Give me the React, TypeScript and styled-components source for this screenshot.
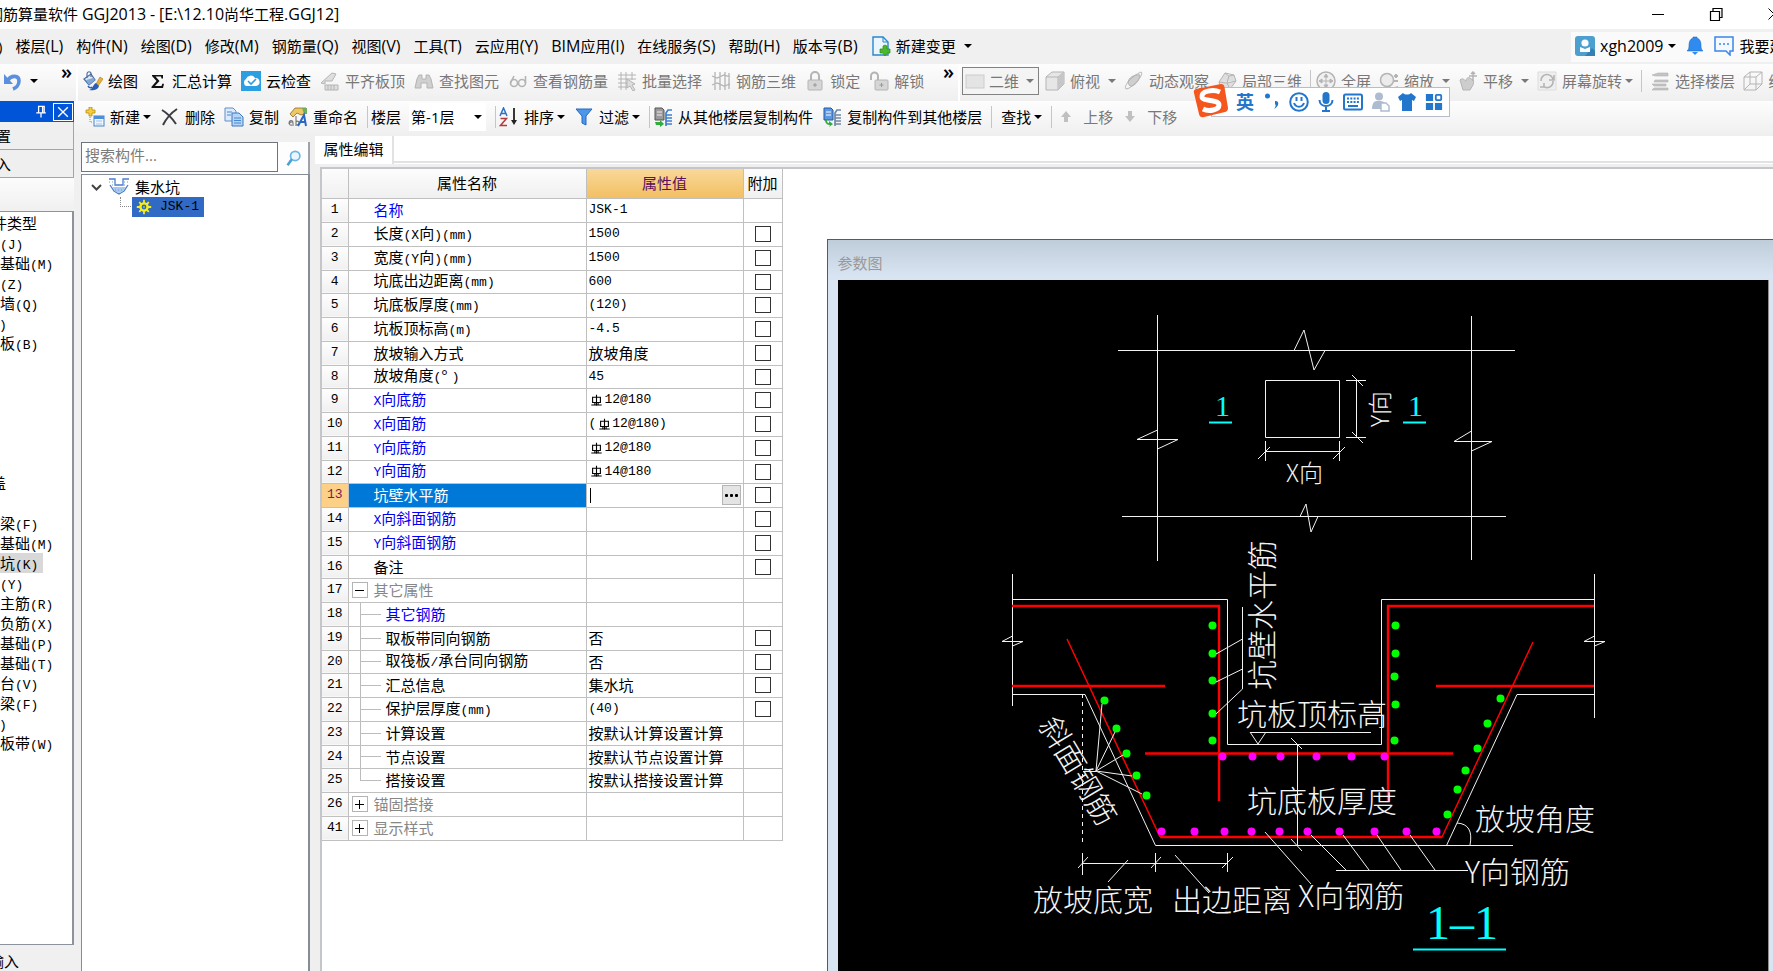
import React from "react";
import styled, { createGlobalStyle, css } from "styled-components";

const SANS = '"Open Sans", "Noto Sans CJK SC", sans-serif';
const MONO = '"Liberation Mono", "Noto Sans CJK SC", monospace';

const GlobalStyle = createGlobalStyle`
  *, *::before, *::after { box-sizing: border-box; }
  body { margin: 0; background: #fff; color: #000; font: 15px/20px ${SANS}; overflow: hidden; }
  button, input, select { font: inherit; color: inherit; margin: 0; padding: 0; border: 0; background: none; border-radius: 0; }
`;

/* ---------- icons ---------- */

const G = "#b4b4b4";
const L = "#dedede";

const glyphs: Record<string, React.ReactNode> = {
  undo: (
    <>
      <path d="M6 9c3-5 11-5 11 1 0 4-3 7-6 8" fill="none" stroke="#5b8fe0" strokeWidth="3.600" />
      <path d="M2 3v10h9z" fill="#5b8fe0" />
    </>
  ),
  paint: (
    <>
      <path d="M1 8l7-5 4 6-6 5z" fill="#dfe9f5" stroke="#4d6f9b" strokeWidth="1.200" />
      <path d="M3 9l7-2 2 2-6 5z" fill="#7fa7d8" />
      <path d="M4 7V3c0-3 4-3 4 0v3" fill="none" stroke="#4d6f9b" strokeWidth="1.200" />
      <path d="M17 6l3 2-5 7-2-2z" fill="#e9b23c" stroke="#a67617" strokeWidth=".6" />
      <path d="M13 12l3 3c-1 4-6 5-10 4 4-1 4-6 7-7z" fill="#2a5fb8" />
      <path d="M5 15c1 2 3 2 4 1" fill="none" stroke="#2a5fb8" strokeWidth="1.500" />
    </>
  ),
  sigma: <path d="M5 4h11v3.500h-1.500L14 5.600H8.500l4 4.400-4.600 5H14.500l.8-2.200H17L16 17H4.500v-1.200L9.500 10 5 5z" fill="#111" />,
  cloud: (
    <>
      <rect width="20" height="20" fill="#2b9fe2" />
      <path d="M5 15a4 4 0 0 1 0-7 5 5 0 0 1 9-1 4 4 0 0 1 1 8z" fill="#fff" />
      <path d="M7 10l3 3 5-5" fill="none" stroke="#2b9fe2" strokeWidth="1.600" />
    </>
  ),
  align: (
    <>
      <path d="M1 12L12 2l4 1-4 7H5v3z" fill={L} stroke={G} />
      <path d="M5 14h13v5H5zM8 14v5M11 14v5M14 14v5" fill={L} stroke={G} />
    </>
  ),
  find: (
    <path d="M3 8l2-4h3v4h4V4h3l2 4 2 9h-6v-5H7v5H1z" fill="#d0d0d0" stroke={G} />
  ),
  glasses: (
    <g fill="none" stroke={G} strokeWidth="1.600">
      <circle cx="6" cy="12" r="3.500" />
      <circle cx="14" cy="12" r="3.500" />
      <path d="M2.500 12L6 5M17.500 12V5" />
    </g>
  ),
  batch: (
    <>
      <path d="M1 4h18M1 8h18M1 12h10M1 16h10M4 1v18M9 1v18M15 1v8" stroke={G} fill="none" />
      <path d="M10 8l8 5-3 1 3 5-2 1-3-5-3 2z" fill={L} stroke={G} />
    </>
  ),
  rebar3d: (
    <path d="M1 5l5 2 7-3 6 2M1 14l5-2 7 3 6-2M4 1v18M9 1v18M14 1v18M18 2v16" stroke={G} fill="none" strokeWidth="1.300" />
  ),
  lock: (
    <>
      <path d="M6 9V5a4 4 0 0 1 8 0v4" fill="none" stroke={G} strokeWidth="2" />
      <rect x="3" y="9" width="14" height="10" rx="1" fill="#d6d6d6" stroke={G} />
      <path d="M10 12v4M8 14h4" stroke="#999" />
    </>
  ),
  unlock: (
    <>
      <path d="M2 9V5a3.500 3.500 0 0 1 7 0v4" fill="none" stroke={G} strokeWidth="2" />
      <rect x="6" y="9" width="13" height="10" rx="1" fill="#d6d6d6" stroke={G} />
      <path d="M12.500 12v4M10.500 14h4" stroke="#999" />
    </>
  ),
  slab: <rect x="1" y="4" width="18" height="13" fill="#e4e4e4" stroke="#ccc" />,
  cube: (
    <>
      <path d="M1 6l6-5h12v12l-6 6H1z" fill="#e6e6e6" stroke={G} />
      <path d="M1 6h12v13M13 6l6-5" fill="none" stroke={G} />
      <path d="M13 6l6-5v12l-6 6z" fill="#c6c6c6" />
    </>
  ),
  wire: <path d="M1 6l6-5h12v12l-6 6H1zM1 6h12v13M13 6l6-5M7 1v12h12M7 13l-6 6" fill="none" stroke={G} />,
  orbit: (
    <>
      <path d="M4 12c0-5 6-9 12-8-1 6-5 11-10 11z" fill="#cfcfcf" stroke={G} />
      <path d="M2 18C-1 15 8 5 17 1c4 2-9 17-15 17z" fill="none" stroke={G} />
    </>
  ),
  part3d: (
    <path d="M2 11l6-9 9 2 2 6-6 8-9-1zM2 11l8 1 9-2M10 12l3 6M8 2l4 3 5-1M12 5l-2 7" fill={L} stroke={G} />
  ),
  full: (
    <>
      <circle cx="10" cy="10" r="9" fill="#f0f0f0" stroke={G} strokeWidth="1.500" />
      <path d="M10 3l2 3H8zM10 17l2-3H8zM3 10l3-2v4zM17 10l-3-2v4zM5 10h10M10 5v10" fill={G} stroke={G} />
    </>
  ),
  zoom: (
    <>
      <circle cx="8" cy="9" r="6.500" fill="#ececec" stroke={G} strokeWidth="1.500" />
      <path d="M10 15l3 4M17 3v4M15 5h4M15 10h4M16 17l3-1" stroke={G} strokeWidth="2" fill="none" />
    </>
  ),
  pan: (
    <>
      <path d="M2 9c3-3 5 1 6 1 0-4 4-4 5-2 3 0 3 4 2 6l-3 5H5z" fill="#cdcdcd" stroke={G} />
      <path d="M15 1v9M11 5h8M13 3l2-2 2 2" stroke={G} fill="none" strokeWidth="1.500" />
    </>
  ),
  rotate: (
    <>
      <path d="M1 1h18v18H1z" fill="#efefef" stroke="#ddd" />
      <path d="M4 10a6 6 0 0 1 12-1M16 10a6 6 0 0 1-10 5M17 4v5h-5M3 16h4v-4" fill="none" stroke={G} strokeWidth="1.600" />
    </>
  ),
  floors: <path d="M2 4l6-2h10v3H5zM5 9h13v2H4zM2 13h14v2H4zM4 17h14v2H2z" fill="#c4c4c4" stroke={G} strokeWidth=".6" />,
  newItem: (
    <>
      <path d="M4 0h3v3h3v3H7v3H4V6H1V3h3z" fill="#f4cf3a" stroke="#b98c12" strokeWidth=".8" />
      <rect x="9" y="9" width="10" height="10" fill="#eef5fd" stroke="#4b83c6" />
      <path d="M9 9h10v3H9z" fill="#4b8fd9" />
      <path d="M11 14h6M11 17h6" stroke="#9fc1e6" />
      <path d="M5 10v5h3" fill="none" stroke="#888" strokeDasharray="1 1" />
    </>
  ),
  remove: <path d="M2 3c5 3 10 8 14 14M17 2C11 6 6 12 3 18" stroke="#3c3c44" strokeWidth="2" fill="none" />,
  copy: (
    <>
      <path d="M1 1h8l3 3v10H1z" fill="#dcebfb" stroke="#5f8fcb" />
      <path d="M8 6h7l4 4v9H8z" fill="#b5d5f7" stroke="#3f77bd" />
      <path d="M10 11h7M10 13.500h7M10 16h7M3 5h5M3 8h4" stroke="#4b87cf" />
    </>
  ),
  rename: (
    <>
      <path d="M2 7l5-6h11v5l-5 2-4-2-4 4z" fill="#efc765" stroke="#8c6a25" strokeWidth=".8" />
      <path d="M14 1h5v6h-3z" fill="#6fae5a" />
      <path d="M1 17c0-5 4-4 4-1v3M5 15c-4-1-5 4-1 3M8 9v10M8 15c3-3 5 3 0 3" fill="none" stroke="#777" strokeWidth="1.100" />
      <path d="M10 19l6-11 2 11M12 15h6" fill="none" stroke="#2a66c4" strokeWidth="2" />
    </>
  ),
  sort: (
    <>
      <path d="M1 9l3.500-8L8 9M2.200 6.500h4.600" fill="none" stroke="#2f6fc4" strokeWidth="1.500" />
      <path d="M1.500 11.500h6l-6 7h6.500" fill="none" stroke="#b33b3b" strokeWidth="1.500" />
      <path d="M15 1v14" stroke="#222" strokeWidth="1.800" />
      <path d="M12 13h6l-3 5z" fill="#222" />
    </>
  ),
  filter: <path d="M2 2h16l-6 7v9l-4-2V9z" fill="#4c97ec" stroke="#2468bd" />,
  copyFrom: (
    <>
      <path d="M2 1h7l2 2v10H2z" fill="#9a9a9a" stroke="#555" />
      <path d="M4 5h5M4 8h5" stroke="#eee" />
      <path d="M19 3h-4l-2 3v13M13 8h6M13 11h6M13 14h6M13 17h6" fill="none" stroke="#3f7fd0" strokeWidth="1.700" />
      <path d="M2 15h5v-2l4 4-4 3v-2H3z" fill="#2fae3e" />
    </>
  ),
  copyTo: (
    <>
      <path d="M2 1h7l2 2v10H2z" fill="#5c97e4" stroke="#25589f" />
      <path d="M4 5h5M4 8h5" stroke="#fff" />
      <path d="M19 3h-4l-2 3v13M13 8h6M13 11h6M13 14h6M13 17h6" fill="none" stroke="#6e88a8" strokeWidth="1.700" />
      <path d="M3 13c0 4 3 5 5 5l-1 2 4-3-4-3v2c-2 0-2-2-2-3z" fill="#2fae3e" />
    </>
  ),
  up: <path d="M8 4l5 6h-3v5H6v-5H3z" fill="#c0c0c0" />,
  down: <path d="M8 15l5-6h-3V4H6v5H3z" fill="#c0c0c0" />,
  change: (
    <>
      <path d="M2 1h10l5 5v13H2z" fill="#eaf5fd" stroke="#2a86cc" strokeWidth="1.400" />
      <path d="M12 1v5h5" fill="none" stroke="#2a86cc" />
      <path d="M12 10l2-1 2 1v3h3v4h-3l-2 3-2-3H9v-4h3z" fill="#4bb928" stroke="#2f8a15" strokeWidth=".7" />
    </>
  ),
  user: (
    <>
      <rect width="20" height="20" rx="3" fill="#4d9fd0" />
      <path d="M10 20l7-8 3 3v5z" fill="#3580b0" />
      <circle cx="10" cy="7" r="3.600" fill="#fff" />
      <path d="M5 11l5 2 5-2v5H5z" fill="#fff" />
    </>
  ),
  bell: (
    <>
      <path d="M8 1h4v1c3 1 4 4 4 7 0 4 1 5 2 6H2c1-1 2-2 2-6 0-3 1-6 4-7z" fill="#2f8bf0" stroke="#1f5fae" strokeWidth=".5" />
      <path d="M7 16h6l-3 3z" fill="#2f8bf0" />
    </>
  ),
  chat: (
    <>
      <path d="M1 1h18v14h-3v4l-4-4H1z" fill="#f5f9ff" stroke="#3b86e8" strokeWidth="1.500" />
      <path d="M5 8h2M9 8h2M13 8h2" stroke="#3b86e8" strokeWidth="1.500" />
    </>
  ),
  search: (
    <>
      <circle cx="12" cy="7" r="5.500" fill="#eaf5fd" stroke="#6cb6e4" strokeWidth="2" />
      <path d="M8 11l-5 7" stroke="#4a9fd6" strokeWidth="3" />
    </>
  ),
  pit: (
    <>
      <path d="M0 2h6v6h8V2h6M1 8l4 6 5 3 5-3 4-6" fill="none" stroke="#4a7ecb" strokeWidth="1.300" />
      <path d="M3 10h14l-4 5-3 1-3-1z" fill="#a9c8ef" />
      <path d="M0 5h5M15 5h5M3 8h14M6 13h8" stroke="#6d9bdc" strokeDasharray="1 2" />
    </>
  ),
  gear: (
    <>
      <circle cx="10" cy="10" r="4.500" fill="none" stroke="#f5ee18" strokeWidth="3" />
      <path d="M10 1v4M10 15v4M1 10h4M15 10h4M4 4l2.500 2.500M13.500 13.500L16 16M4 16l2.500-2.500M13.500 6.500L16 4" stroke="#f5ee18" strokeWidth="2.200" />
      <circle cx="10" cy="10" r="1" fill="#f5ee18" />
    </>
  ),
  pin: <path d="M7 3h7v8H7zM4 11h12M10 11v6M12 3v8" fill="none" stroke="#fff" strokeWidth="1.600" />,
  cross: <path d="M4 4l12 12M16 4L4 16" fill="none" stroke="#fff" strokeWidth="1.700" />,
  min: <path d="M4 10.500h12" stroke="#000" />,
  restore: <path d="M4.500 7.500h9v9h-9zM7 7.500v-3h9v9h-2.500" fill="none" stroke="#000" strokeWidth="1.200" />,
  close: <path d="M4.500 4.500l11 11M15.500 4.500l-11 11" stroke="#000" />,
  rebar: (
    <path d="M4 5h12v8H4zM10 1v17M2 17h16M7.500 13v4M12.500 13v4" fill="none" stroke="#000" strokeWidth="1.700" />
  ),
  punct: <path d="M3 4a2.500 2.500 0 1 1 5 0 2.500 2.500 0 1 1-5 0M13 9c4-1 5 5-1 8 2-3 2-4 1-5z" fill="#2277cc" />,
  smile: (
    <g fill="none" stroke="#2277cc" strokeWidth="2">
      <circle cx="10" cy="10" r="8.800" />
      <path d="M7.500 5v4M12.500 5v4M5 11c2 5 8 5 10 0" />
    </g>
  ),
  mic: (
    <>
      <rect x="6.500" y="0" width="7" height="12" rx="3.500" fill="#2277cc" />
      <path d="M3.500 8c0 8 13 8 13 0M10 14v4M6 19h8" fill="none" stroke="#2277cc" strokeWidth="2" />
    </>
  ),
  keyboard: (
    <>
      <rect x="1" y="2.500" width="18" height="15" rx="1.500" fill="none" stroke="#2277cc" strokeWidth="2" />
      <path d="M4 6.500h12M4 10h12" stroke="#2277cc" strokeWidth="2" strokeDasharray="2 1.300" />
      <path d="M5 14h10" stroke="#2277cc" strokeWidth="2" />
    </>
  ),
  person: (
    <>
      <circle cx="9" cy="4.500" r="4" fill="#aebcd2" />
      <path d="M2 17c0-9 5-8 7-8s6 0 7 4v4z" fill="#aebcd2" />
      <path d="M11 11h5l3 3v5h-8z" fill="#fff" stroke="#aebcd2" strokeWidth="1.500" />
    </>
  ),
  shirt: <path d="M6 1c2 2 6 2 8 0l5 4-2 4-2-1v11H5V8L3 9 1 5z" fill="#2277cc" />,
  apps: (
    <>
      <path d="M1 1h8v8H1zM1 11h8v8H1zM11 11h8v8h-8z" fill="#2277cc" />
      <rect x="12" y="2" width="6" height="6" rx="1" fill="none" stroke="#2277cc" strokeWidth="2" />
    </>
  ),
};

const IconSvg = styled.svg<{ $size: number }>`
  flex: none;
  display: block;
  width: ${(p) => p.$size}px;
  height: ${(p) => p.$size}px;
`;

const Icon = ({ name, size = 20 }: { name: string; size?: number }) => (
  <IconSvg $size={size} viewBox="0 0 20 20" aria-hidden="true">
    {glyphs[name]}
  </IconSvg>
);

const Arrow = styled.span`
  flex: none;
  border: 4px solid transparent;
  border-top-color: currentColor;
  border-bottom-width: 0;
`;

/* Half-width characters have a face of their own next to the full-width ones. */
const Half = styled.span<{ $ui?: boolean }>`
  font-family: ${(p) => (p.$ui ? SANS : MONO)};
  font-size: ${(p) => (p.$ui ? 16 : 13)}px;
`;

const Mixed = ({ text, ui }: { text: string; ui?: boolean }) => (
  <>
    {text.split(/([\x21-\x7e]+)/).map((part, i) => (i % 2 ? <Half key={i} $ui={ui}>{part}</Half> : part))}
  </>
);

/* ---------- frame ---------- */

const Page = styled.div`
  position: relative;
  display: flex;
  flex-direction: column;
  height: 100vh;
  overflow: hidden;
  white-space: nowrap;
`;

const TitleBar = styled.header`
  display: flex;
  align-items: center;
  height: 29px;
  padding-bottom: 2px;
`;

const Title = styled.h1`
  flex: 1;
  margin: 0;
  font-size: 15px;
  font-weight: 400;
  text-indent: -12px;
`;

const WindowButtons = styled.div`
  display: flex;
  flex: none;
  margin-right: -30px;
`;

const WindowButton = styled.button`
  display: flex;
  justify-content: center;
  align-items: center;
  width: 58px;
  height: 26px;
`;

const MenuBar = styled.nav`
  display: flex;
  align-items: center;
  height: 35px;
  background: #f0f0f0;
`;

const Menus = styled.div`
  display: flex;
  flex: 1;
  align-items: center;
  gap: 13px;
  min-width: 0;
  padding-bottom: 2px;
  overflow: hidden;
`;

const MenuButton = styled.button<{ $cut?: boolean }>`
  display: flex;
  flex: none;
  align-items: center;
  gap: 8px;
  margin-left: ${(p) => (p.$cut ? -2 : 0)}px;
`;

const UserArea = styled.div`
  display: flex;
  flex: none;
  align-items: center;
  gap: 9px;
  width: 202px;
  height: 30px;
  padding: 0 0 2px 4px;
  background: #fafafa;
  overflow: hidden;
`;

const UserButton = styled.button`
  display: flex;
  flex: none;
  align-items: center;
  gap: 5px;
`;

/* ---------- toolbars ---------- */

const ToolRow = styled.div<{ $height: number }>`
  display: flex;
  height: ${(p) => p.$height}px;
  gap: 2px;
`;

const ToolGroup = styled.div<{ $width?: number; $start: number; $gap?: number }>`
  display: flex;
  flex: ${(p) => (p.$width ? "none" : "1")};
  width: ${(p) => (p.$width ? p.$width + "px" : "auto")};
  min-width: 0;
  align-items: center;
  gap: ${(p) => p.$gap ?? 9}px;
  padding: 0 0 3px ${(p) => p.$start}px;
  background: linear-gradient(#fdfdfd, #efefef);
  overflow: hidden;
`;

const ToolButton = styled.button<{ $tight?: boolean }>`
  display: flex;
  flex: none;
  align-items: center;
  gap: ${(p) => (p.$tight ? 3 : 8)}px;
  &:disabled { color: #787878; }
`;

const ToolFace = styled.span`
  display: flex;
  align-items: center;
  gap: 5px;
`;

const Divider = styled.span<{ $pull?: number }>`
  flex: none;
  width: 1px;
  height: 22px;
  margin-right: ${(p) => -(p.$pull ?? 6)}px;
  background: #c6c6c6;
`;

const Overflow = styled.button`
  flex: none;
  align-self: flex-start;
  margin-left: auto;
  margin-right: 4px;
  font-size: 20px;
  font-weight: 600;
  line-height: 16px;
`;

const Picker = styled.div<{ $framed?: boolean }>`
  display: flex;
  flex: none;
  align-items: center;
  width: 77px;
  height: 28px;
  margin-right: ${(p) => (p.$framed ? -2 : 0)}px;
  padding: 0 4px 0 2px;
  gap: 4px;
  background: ${(p) => (p.$framed ? "#f4f4f4" : "#fff")};
  border: ${(p) => (p.$framed ? "1px solid #828282" : "0")};
  color: ${(p) => (p.$framed ? "#787878" : "#000")};
  select { flex: 1; min-width: 0; appearance: none; opacity: 1; }
`;

const PickerLabel = styled.label`
  display: flex;
  flex: none;
  align-items: center;
  gap: 8px;
`;

type ToolProps = { icon?: string; label: string; menu?: boolean; tight?: boolean; off?: boolean };

const Tool = ({ icon, label, menu, tight, off }: ToolProps) => (
  <ToolButton type="button" disabled={off} $tight={tight}>
    <ToolFace>
      {icon && <Icon name={icon} />}
      {label}
    </ToolFace>
    {menu && <Arrow />}
  </ToolButton>
);

/* ---------- side panels ---------- */

const Body = styled.div`
  display: flex;
  flex: 1;
  min-height: 0;
`;

const Rail = styled.aside`
  display: flex;
  flex: none;
  flex-direction: column;
  width: 74px;
  background: #f0f0f0;
  overflow: hidden;
`;

const RailTitle = styled.div`
  display: flex;
  flex: none;
  justify-content: flex-end;
  align-items: center;
  gap: 4px;
  height: 21px;
  padding-right: 1px;
  background: #0054d8;
`;

const RailClose = styled.button`
  display: flex;
  justify-content: center;
  align-items: center;
  width: 20px;
  height: 18px;
  border: 1px solid #fff;
`;

const RailTab = styled.button`
  flex: none;
  height: 28px;
  border: solid #a5a5a5;
  border-width: 0 1px 1px 0;
  background: #efefef;
  text-align: left;
  text-indent: -4px;
`;

const RailGap = styled.div`
  flex: none;
  height: 33px;
  background: linear-gradient(#fcfcfc, #f0f0f0);
`;

const TypeList = styled.ul`
  flex: 1;
  min-height: 0;
  margin: 0;
  padding: 1px 0 0;
  list-style: none;
  background: #fff;
  border: solid #8d939c;
  border-width: 1px 2px 1px 0;
  overflow: hidden;
`;

const TypeRow = styled.li<{ $cut: number; $current?: boolean }>`
  width: 43px;
  height: 20px;
  text-indent: ${(p) => -p.$cut}px;
  background: ${(p) => (p.$current ? "#d8d8d8" : "none")};
`;

const RailFoot = styled.button`
  flex: none;
  height: 26px;
  padding-top: 5px;
  text-align: left;
  text-indent: -11px;
`;

const TreePanel = styled.section`
  display: flex;
  flex: none;
  flex-direction: column;
  width: 236px;
  padding: 6px 0 0 7px;
  background: #f0f0f0;
`;

const SearchRow = styled.div`
  display: flex;
  flex: none;
  height: 32px;
  background: #fdfdfd;
  border-right: 2px solid #9fa2a8;
`;

const SearchInput = styled.input`
  flex: 1;
  min-width: 0;
  height: 30px;
  padding: 0 0 4px 3px;
  border: 1px solid #70757c;
  background: #fff;
  &::placeholder { color: #7b7b7b; opacity: 1; }
`;

const SearchButton = styled.button`
  display: flex;
  flex: none;
  justify-content: center;
  align-items: center;
  width: 30px;
`;

const Tree = styled.div`
  flex: 1;
  padding: 2px 0 0 8px;
  border: solid #878d96;
  border-width: 1px 2px 0 1px;
  background: #fff;
`;

const TreeRow = styled.div`
  display: flex;
  align-items: center;
  gap: 6px;
  height: 20px;
`;

const Chevron = styled.svg`
  width: 13px;
  height: 12px;
`;

const Branch = styled.span`
  align-self: flex-start;
  width: 11px;
  height: 10px;
  margin-left: 30px;
  border: dotted #888;
  border-width: 0 0 1px 1px;
`;

const TreeLeaf = styled.button`
  display: flex;
  align-items: center;
  gap: 8px;
  height: 20px;
  margin-left: -5px;
  padding: 0 5px 0 4px;
  background: #316ac5;
`;

/* ---------- property grid ---------- */

const Main = styled.main`
  display: flex;
  flex: 1;
  flex-direction: column;
  min-width: 0;
  padding-left: 5px;
  background: #efefef;
`;

const TabStrip = styled.div`
  display: flex;
  flex: none;
  height: 28px;
  background: #fff;
`;

const Tab = styled.button`
  width: 79px;
  height: 28px;
  padding-bottom: 2px;
  border-right: 2px solid #e2e2e4;
  background: #fff;
`;

const TabRest = styled.div`
  flex: 1;
  height: 27px;
  border-bottom: 2px solid #e2e2e4;
`;

const Sheet = styled.div`
  display: flex;
  flex: 1;
  align-items: flex-start;
  min-height: 0;
  margin-top: 3px;
  margin-left: 5px;
  border: solid #c4c6ca;
  border-width: 2px 0 0 2px;
  background: #fff;
`;

const Grid = styled.table`
  flex: none;
  width: 460px;
  table-layout: fixed;
  border-collapse: collapse;
  th, td { padding: 0; border: solid #c0c0c0; border-width: 0 1px 1px 0; font-weight: 400; text-align: left; }
  tbody tr { height: 24px; }
  tbody tr:nth-child(4n) { height: 23px; }
`;

const HeadCell = styled.th<{ $active?: boolean }>`
  && {
    height: 29px;
    text-align: center;
    color: ${(p) => (p.$active ? "#5c0f5c" : "#000")};
    background: ${(p) => (p.$active ? "linear-gradient(#f9d899, #f2bf62)" : "linear-gradient(#fcfcfc, #f0f0f0)")};
  }
`;

const NumberCell = styled.th<{ $active?: boolean }>`
  && {
    text-align: center;
    font-family: ${MONO};
    font-size: 13px;
    color: ${(p) => (p.$active ? "#7a1c54" : "#000")};
    background: ${(p) => (p.$active ? "#fdd088" : "linear-gradient(#fefefe, #f0f0f0)")};
  }
`;

type Tone = "link" | "group" | "active" | undefined;
const tones = { link: "#0000f5", group: "#878787", active: "#fff" };
const line = "linear-gradient(#bcbcbc, #bcbcbc)";

const NameCell = styled.td<{ $tone: Tone; $child?: boolean; $last?: boolean }>`
  color: ${(p) => (p.$tone ? tones[p.$tone] : "#000")};
  background: ${(p) => (p.$tone === "active" ? "#0078d7" : "none")};
  ${(p) =>
    p.$child &&
    css`
      background: ${line} 11px 0 / 1px ${p.$last ? "50%" : "100%"} no-repeat, ${line} 11px 50% / 21px 1px no-repeat;
    `}
`;

const NameFace = styled.div<{ $indent: number }>`
  display: flex;
  align-items: center;
  height: 20px;
  padding-left: ${(p) => p.$indent}px;
`;

const Expander = styled.button`
  flex: none;
  width: 16px;
  height: 16px;
  margin-right: 6px;
  border: 1px solid #b4b4b4;
  background: linear-gradient(#000, #000) center / 9px 1px no-repeat, #fff;
  color: #000;
  &[aria-expanded="false"] {
    background: linear-gradient(#000, #000) center / 9px 1px no-repeat,
      linear-gradient(#000, #000) center / 1px 9px no-repeat, #fff;
  }
`;

const ValueFace = styled.div`
  display: flex;
  align-items: center;
  height: 20px;
  padding-left: 2px;
`;

const RebarMark = styled.span`
  display: flex;
  justify-content: center;
  width: 16px;
`;

const Caret = styled.span`
  flex: none;
  width: 1px;
  height: 15px;
  margin-left: 1px;
  background: #000;
`;

const ValueInput = styled.input`
  flex: 1;
  min-width: 0;
  height: 20px;
`;

const MoreButton = styled.button`
  display: flex;
  flex: none;
  justify-content: center;
  align-items: center;
  gap: 2px;
  width: 19px;
  height: 20px;
  margin-right: 2px;
  border: 1px solid #b5b5b5;
  background: #e4e4e4;
  span { width: 3px; height: 3px; background: #000; border-radius: 1px; }
`;

const Check = styled.input`
  display: block;
  width: 16px;
  height: 16px;
  margin: 0 auto;
  appearance: none;
  border: 1px solid #333;
  background: #fff;
`;

type Row = { n: number; name: string; value?: string; tone?: Tone; check?: boolean; child?: boolean; open?: boolean };

const rows: Row[] = [
  { n: 1, name: "名称", value: "JSK-1", tone: "link" },
  { n: 2, name: "长度(X向)(mm)", value: "1500", check: true },
  { n: 3, name: "宽度(Y向)(mm)", value: "1500", check: true },
  { n: 4, name: "坑底出边距离(mm)", value: "600", check: true },
  { n: 5, name: "坑底板厚度(mm)", value: "(120)", check: true },
  { n: 6, name: "坑板顶标高(m)", value: "-4.5", check: true },
  { n: 7, name: "放坡输入方式", value: "放坡角度", check: true },
  { n: 8, name: "放坡角度(° )", value: "45", check: true },
  { n: 9, name: "X向底筋", value: "#12@180", tone: "link", check: true },
  { n: 10, name: "X向面筋", value: "(#12@180)", tone: "link", check: true },
  { n: 11, name: "Y向底筋", value: "#12@180", tone: "link", check: true },
  { n: 12, name: "Y向面筋", value: "#14@180", tone: "link", check: true },
  { n: 13, name: "坑壁水平筋", tone: "active", check: true },
  { n: 14, name: "X向斜面钢筋", tone: "link", check: true },
  { n: 15, name: "Y向斜面钢筋", tone: "link", check: true },
  { n: 16, name: "备注", check: true },
  { n: 17, name: "其它属性", tone: "group", open: true },
  { n: 18, name: "其它钢筋", tone: "link", child: true },
  { n: 19, name: "取板带同向钢筋", value: "否", child: true, check: true },
  { n: 20, name: "取筏板/承台同向钢筋", value: "否", child: true, check: true },
  { n: 21, name: "汇总信息", value: "集水坑", child: true, check: true },
  { n: 22, name: "保护层厚度(mm)", value: "(40)", child: true, check: true },
  { n: 23, name: "计算设置", value: "按默认计算设置计算", child: true },
  { n: 24, name: "节点设置", value: "按默认节点设置计算", child: true },
  { n: 25, name: "搭接设置", value: "按默认搭接设置计算", child: true },
  { n: 26, name: "锚固搭接", tone: "group", open: false },
  { n: 41, name: "显示样式", tone: "group", open: false },
];

/* "#" in a value stands for the rebar grade mark. */
const Value = ({ text }: { text: string }) => {
  const [before, after] = text.split("#");
  if (after === undefined) return <Mixed text={text} />;
  return (
    <>
      <Mixed text={before} />
      <RebarMark>
        <Icon name="rebar" size={13} />
      </RebarMark>
      <Mixed text={after} />
    </>
  );
};

const PropertyGrid = () => (
  <Grid>
    <colgroup>
      <col width="26" />
      <col width="238" />
      <col width="157" />
      <col width="39" />
    </colgroup>
    <thead>
      <tr>
        <HeadCell aria-label="序号" />
        <HeadCell>属性名称</HeadCell>
        <HeadCell $active>属性值</HeadCell>
        <HeadCell>附加</HeadCell>
      </tr>
    </thead>
    <tbody>
      {rows.map((r) => {
        const active = r.tone === "active";
        const group = r.open !== undefined;
        return (
          <tr key={r.n}>
            <NumberCell $active={active}>{r.n}</NumberCell>
            <NameCell $tone={r.tone} $child={r.child} $last={r.n === 25}>
              <NameFace $indent={group ? 3 : r.child ? 37 : 25}>
                {group && <Expander type="button" aria-expanded={r.open} aria-label={r.name} />}
                <span><Mixed text={r.name} /></span>
              </NameFace>
            </NameCell>
            <td>
              <ValueFace>
                {r.value && <Value text={r.value} />}
                {active && (
                  <>
                    <Caret />
                    <ValueInput aria-label={r.name} />
                    <MoreButton type="button" aria-label="更多"><span /><span /><span /></MoreButton>
                  </>
                )}
              </ValueFace>
            </td>
            <td>{r.check && <Check type="checkbox" aria-label={r.name + " 附加"} />}</td>
          </tr>
        );
      })}
    </tbody>
  </Grid>
);

/* ---------- parameter drawing ---------- */

const FigureWindow = styled.section`
  display: flex;
  flex: 1;
  flex-direction: column;
  align-self: stretch;
  min-width: 0;
  margin: 70px 0 0 44px;
  padding: 0 4px 0 10px;
  border: solid #5a5a5a;
  border-width: 1px 0 0 1px;
  background: linear-gradient(#bfccda, #d8e4f2 36px);
`;

const FigureTitle = styled.h2`
  flex: none;
  height: 40px;
  margin: 0;
  padding-top: 13px;
  font-size: 15px;
  font-weight: 400;
  color: #999;
`;

const Canvas = styled.div`
  flex: 1;
  min-height: 0;
  background: #000;
  border-right: 1px solid #8c8c8c;
  overflow: hidden;
`;

const Drawing = styled.svg`
  display: block;
  font-family: "Noto Sans CJK SC", sans-serif;
  font-weight: 300;
  font-size: 30px;
  fill: none;
  stroke: #f2f2f2;
  stroke-width: 1;
  text { fill: #f4f4f4; stroke: none; }
  .small { font-size: 24px; }
  .cyan { fill: #00ffff; font-family: "Liberation Serif", serif; }
  .title { font-size: 48px; }
  .bar { stroke: #ff0000; stroke-width: 2.4; }
`;

const walls: [number, number][] = [
  [1212, 624], [1212, 652], [1212, 679], [1212, 712], [1212, 739],
  [1104, 699], [1116, 727], [1126, 752], [1136, 774], [1146, 794],
  [1395, 624], [1395, 652], [1394, 675], [1395, 703], [1394, 739],
  [1500, 697], [1487, 722], [1477, 747], [1465, 769], [1457, 788], [1447, 813],
];
const topBars = [1222, 1252, 1280, 1316, 1351, 1384];
const bottomBars = [1161, 1194, 1224, 1251, 1279, 1307, 1339, 1374, 1406, 1436];

const SectionDrawing = () => (
  <Drawing width="930" height="692" viewBox="838 279 930 692" role="img" aria-label="集水坑参数图">
    <path d="M1157.500 314V560M1471.500 315V559M1118 349.500H1294L1304 329L1314 369L1325 349.500M1294 349.500H1515M1122 515.500H1506M1300 515.500L1306 503L1311 531L1318 515.500" />
    <path d="M1157.500 429L1137 438.500H1178L1157.500 448M1471.500 430L1454 440.500H1492L1471.500 450" />
    <path d="M1265.500 379.500H1339.500V436.500H1265.500zM1265.500 440V460M1339.500 440V460M1265.500 450.500H1339.500M1258 458L1270 446M1333 458L1345 446" />
    <path d="M1356.500 379.500V436.500M1346 379.500H1366M1346 436.500H1366M1352 374L1363 385M1352 431L1363 442" />
    <text className="small" x="1286" y="481">X向</text>
    <text className="small" transform="translate(1389 426) rotate(-90)">Y向</text>
    <text className="cyan" x="1215" y="415">1</text>
    <text className="cyan" x="1408" y="415">1</text>
    <path d="M1209 421.500H1232M1403 421.500H1426M1413 948.500H1506" stroke="#0ff" strokeWidth="2" />

    <path d="M1012.500 573V705M1594.500 573V717M1012.500 635L1002 640.500H1023L1012.500 645M1594.500 635L1584 640.500H1605L1594.500 645" />
    <path d="M1012 598.500H1227.500V743.500H1381.500V598.500H1594" />
    <path d="M1012 693.500H1085L1155.500 844.500H1513M1594 693.500H1517L1446.500 844.500" />
    <path d="M1082.500 693V845" strokeDasharray="4 4" />

    <path className="bar" d="M1012 605H1219V800M1594 605H1388V800M1012 685H1165M1436 685H1594M1145 752.500H1453M1160 836H1442" />
    <path d="M1067 638L1160 836M1442 836L1533 641" stroke="#f00" strokeWidth="1.500" />

    <g fill="#00ff00" stroke="none">
      {walls.map(([x, y]) => <circle key={x + "-" + y} cx={x + 0.5} cy={y + 0.5} r="4" />)}
    </g>
    <g fill="#ff00ff" stroke="none">
      {topBars.map((x) => <circle key={x} cx={x + 0.5} cy="755.500" r="4" />)}
      {bottomBars.map((x) => <circle key={x} cx={x + 0.5} cy="830.500" r="4" />)}
    </g>

    <path d="M1242.500 606V688L1216 713M1242.500 638L1216 653M1242.500 668L1216 681" />
    <path d="M1096 770L1102 703M1096 770L1115 731M1096 770L1123 754M1096 770L1132 775M1096 770L1142 793M1083 770.500H1096" />
    <path d="M1250 731.500H1371M1250 731L1258 743L1266 731M1297.500 743V845M1291 737L1302 748M1291 838L1302 850" />
    <path d="M1457 822Q1474 823 1470 844" />
    <path d="M1336 869.500H1468M1311 834L1346 869M1343 834L1369 869M1377 834L1401 869M1410 834L1435 869M1265 831L1311 883" />
    <path d="M1082.500 862.500H1227.500M1082.500 852V874M1155.500 852V871M1227.500 852V871M1078 867L1088 856M1151 867L1161 856M1222 867L1233 856M1128 859L1108 881M1175 854L1209 892" />

    <text transform="translate(1273 689) rotate(-90)">坑壁水平筋</text>
    <text x="1237" y="724">坑板顶标高</text>
    <text x="1247" y="811">坑底板厚度</text>
    <text x="1475" y="829">放坡角度</text>
    <text x="1465" y="882">Y向钢筋</text>
    <text x="1298" y="906">X向钢筋</text>
    <text x="1033" y="910">放坡底宽</text>
    <text x="1172" y="910">出边距离</text>
    <text transform="translate(1038 724) rotate(59)">斜面钢筋</text>
    <text className="cyan title" x="1426" y="938">1–1</text>
  </Drawing>
);

/* ---------- input method bar ---------- */

const ImeBar = styled.div`
  position: absolute;
  top: 83px;
  left: 1193px;
  display: flex;
  align-items: flex-end;
`;

const ImeLogo = styled.svg`
  flex: none;
  width: 36px;
  height: 36px;
  margin-right: -18px;
  z-index: 1;
`;

const ImeBox = styled.div`
  display: flex;
  align-items: center;
  gap: 7px;
  height: 30px;
  margin-bottom: 2px;
  padding: 0 5px 0 23px;
  border: 1px solid #b9bccb;
  background: #fff;
`;

const ImeButton = styled.button`
  display: flex;
  justify-content: center;
  width: 20px;
  font-size: 18px;
  font-weight: 700;
  color: #2277cc;
`;

const menus = ["楼层(L)", "构件(N)", "绘图(D)", "修改(M)", "钢筋量(Q)", "视图(V)", "工具(T)", "云应用(Y)", "BIM应用(I)", "在线服务(S)", "帮助(H)", "版本号(B)"];

const types: [string, number][] = [
  ["件类型", 8], ["(J)", 0], ["基础(M)", 0], ["(Z)", 0], ["墙(Q)", 0], [")", 1], ["板(B)", 0],
  ["", 0], ["", 0], ["", 0], ["", 0], ["", 0], ["", 0],
  ["盖", 9], ["", 0], ["梁(F)", 0], ["基础(M)", 0], ["坑(K)", 0], ["(Y)", 0], ["主筋(R)", 0], ["负筋(X)", 0],
  ["基础(P)", 0], ["基础(T)", 0], ["台(V)", 0], ["梁(F)", 0], [")", 1], ["板带(W)", 0],
];

export default function App() {
  return (
    <Page>
      <GlobalStyle />
      <TitleBar>
        <Title><Mixed ui text="钢筋算量软件 GGJ2013 - [E:\12.10尚华工程.GGJ12]" /></Title>
        <WindowButtons>
          <WindowButton type="button" aria-label="最小化"><Icon name="min" /></WindowButton>
          <WindowButton type="button" aria-label="还原"><Icon name="restore" /></WindowButton>
          <WindowButton type="button" aria-label="关闭"><Icon name="close" /></WindowButton>
        </WindowButtons>
      </TitleBar>

      <MenuBar>
        <Menus>
          <MenuButton type="button" $cut>)</MenuButton>
          {menus.map((m) => <MenuButton type="button" key={m}><span><Mixed ui text={m} /></span></MenuButton>)}
          <MenuButton type="button">
            <ToolFace><Icon name="change" />新建变更</ToolFace>
            <Arrow />
          </MenuButton>
        </Menus>
        <UserArea>
          <UserButton type="button"><Icon name="user" /><Mixed ui text="xgh2009" /><Arrow /></UserButton>
          <UserButton type="button" aria-label="通知"><Icon name="bell" /></UserButton>
          <UserButton type="button"><Icon name="chat" />我要建议</UserButton>
        </UserArea>
      </MenuBar>

      <ToolRow $height={37}>
        <ToolGroup $width={76} $start={2}>
          <ToolButton type="button" aria-label="撤销"><Icon name="undo" /><Arrow /></ToolButton>
          <Overflow type="button">»</Overflow>
        </ToolGroup>
        <ToolGroup $width={880} $start={5}>
          <Tool icon="paint" label="绘图" />
          <Tool icon="sigma" label="汇总计算" />
          <Tool icon="cloud" label="云检查" />
          <Tool icon="align" label="平齐板顶" off />
          <Tool icon="find" label="查找图元" off />
          <Tool icon="glasses" label="查看钢筋量" off />
          <Tool icon="batch" label="批量选择" off />
          <Tool icon="rebar3d" label="钢筋三维" off />
          <Tool icon="lock" label="锁定" off />
          <Tool icon="unlock" label="解锁" off />
          <Overflow type="button">»</Overflow>
        </ToolGroup>
        <ToolGroup $start={2} $gap={8}>
          <Picker $framed>
            <Icon name="slab" />
            <select aria-label="视图维度" disabled><option>二维</option></select>
            <Arrow />
          </Picker>
          <Tool icon="cube" label="俯视" menu off />
          <Tool icon="orbit" label="动态观察" off />
          <Tool icon="part3d" label="局部三维" off />
          <Divider $pull={3} />
          <Tool icon="full" label="全屏" off />
          <Tool icon="zoom" label="缩放" menu off />
          <Tool icon="pan" label="平移" menu off />
          <Tool icon="rotate" label="屏幕旋转" menu tight off />
          <Divider $pull={0} />
          <Tool icon="floors" label="选择楼层" off />
          <Tool icon="wire" label="线框" off />
        </ToolGroup>
      </ToolRow>

      <Body>
        <Rail>
          <RailTitle>
            <Icon name="pin" size={16} />
            <RailClose type="button" aria-label="关闭面板"><Icon name="cross" size={16} /></RailClose>
          </RailTitle>
          <RailTab type="button">置</RailTab>
          <RailTab type="button">入</RailTab>
          <RailGap />
          <TypeList>
            {types.map(([t, cut], i) => (
              <TypeRow key={i} $cut={cut} $current={t === "坑(K)"}><Mixed text={t} /></TypeRow>
            ))}
          </TypeList>
          <RailFoot type="button">输入</RailFoot>
        </Rail>

        <Workspace />
      </Body>

      <ImeBar>
        <ImeLogo viewBox="0 0 36 36" aria-hidden="true">
          <path d="M3 6L28 1q3 0 3.500 3L35 25q0 3-3 4L11 34q-4 1-5-3L1 10q-1-3 2-4z" fill="#f4561d" />
          <path d="M27 9C20 6 8 8 9 14c1 5 17 2 17 8 0 5-10 7-16 4" fill="none" stroke="#fff" strokeWidth="5" />
        </ImeLogo>
        <ImeBox>
          <ImeButton type="button">英</ImeButton>
          {["punct", "smile", "mic", "keyboard", "person", "shirt", "apps"].map((n) => (
            <ImeButton type="button" key={n} aria-label={n}><Icon name={n} size={n === "apps" ? 18 : 20} /></ImeButton>
          ))}
        </ImeBox>
      </ImeBar>
    </Page>
  );
}

const WorkColumn = styled.div`
  display: flex;
  flex: 1;
  flex-direction: column;
  min-width: 0;
`;

function Workspace() {
  return (
    <WorkColumn>
      <ToolRow $height={35}>
        <ToolGroup $start={11}>
          <Tool icon="newItem" label="新建" menu tight />
          <Tool icon="remove" label="删除" />
          <Tool icon="copy" label="复制" />
          <Tool icon="rename" label="重命名" />
          <Divider />
          <PickerLabel>
            楼层
            <Picker>
              <select><option>第-1层</option></select>
              <Arrow />
            </Picker>
          </PickerLabel>
          <Divider />
          <Tool icon="sort" label="排序" menu tight />
          <Tool icon="filter" label="过滤" menu tight />
          <Divider />
          <Tool icon="copyFrom" label="从其他楼层复制构件" />
          <Tool icon="copyTo" label="复制构件到其他楼层" />
          <Divider $pull={0} />
          <Tool label="查找" menu tight />
          <Divider $pull={3} />
          <Tool icon="up" label="上移" off />
          <Tool icon="down" label="下移" off />
        </ToolGroup>
      </ToolRow>
      <Body>
        <TreePanel>
          <SearchRow>
            <SearchInput type="search" placeholder="搜索构件..." aria-label="搜索构件" />
            <SearchButton type="button" aria-label="搜索"><Icon name="search" size={17} /></SearchButton>
          </SearchRow>
          <Tree>
            <TreeRow>
              <Chevron viewBox="0 0 13 12" aria-hidden="true">
                <path d="M2 4l4.500 4.500L11 4" fill="none" stroke="#444" strokeWidth="2" />
              </Chevron>
              <Icon name="pit" />
              集水坑
            </TreeRow>
            <TreeRow>
              <Branch />
              <TreeLeaf type="button"><Icon name="gear" size={16} /><Mixed text="JSK-1" /></TreeLeaf>
            </TreeRow>
          </Tree>
        </TreePanel>
        <Main>
          <TabStrip role="tablist">
            <Tab type="button" role="tab" aria-selected="true">属性编辑</Tab>
            <TabRest />
          </TabStrip>
          <Sheet>
            <PropertyGrid />
            <FigureWindow>
              <FigureTitle>参数图</FigureTitle>
              <Canvas><SectionDrawing /></Canvas>
            </FigureWindow>
          </Sheet>
        </Main>
      </Body>
    </WorkColumn>
  );
}
